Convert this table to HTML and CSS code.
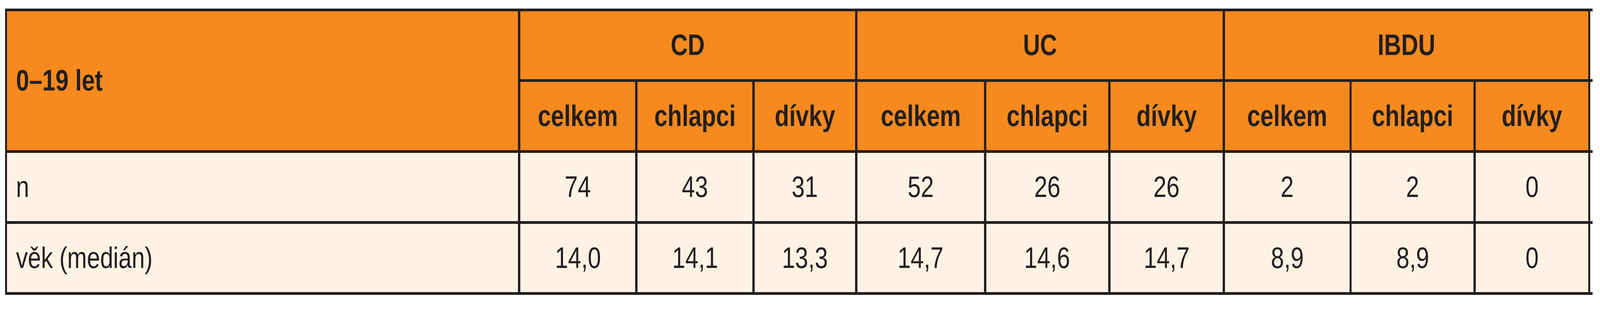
FILE: index.html
```html
<!DOCTYPE html>
<html lang="cs">
<head>
<meta charset="utf-8">
<title>0–19 let</title>
<link rel="stylesheet" href="styles.css">
</head>
<body>
<div class="table">
  <div class="cell head corner"><span class="t">0–19 let</span></div>
  <div class="cell head group"><span class="t">CD</span></div>
  <div class="cell head group"><span class="t">UC</span></div>
  <div class="cell head group"><span class="t">IBDU</span></div>
  <div class="edge" aria-hidden="true"></div>

  <div class="cell head"><span class="t">celkem</span></div>
  <div class="cell head"><span class="t">chlapci</span></div>
  <div class="cell head"><span class="t">dívky</span></div>
  <div class="cell head"><span class="t">celkem</span></div>
  <div class="cell head"><span class="t">chlapci</span></div>
  <div class="cell head"><span class="t">dívky</span></div>
  <div class="cell head"><span class="t">celkem</span></div>
  <div class="cell head"><span class="t">chlapci</span></div>
  <div class="cell head"><span class="t">dívky</span></div>
  <div class="edge" aria-hidden="true"></div>

  <div class="cell label"><span class="t">n</span></div>
  <div class="cell"><span class="t">74</span></div>
  <div class="cell"><span class="t">43</span></div>
  <div class="cell"><span class="t">31</span></div>
  <div class="cell"><span class="t">52</span></div>
  <div class="cell"><span class="t">26</span></div>
  <div class="cell"><span class="t">26</span></div>
  <div class="cell"><span class="t">2</span></div>
  <div class="cell"><span class="t">2</span></div>
  <div class="cell"><span class="t">0</span></div>
  <div class="edge" aria-hidden="true"></div>

  <div class="cell label"><span class="t">věk (medián)</span></div>
  <div class="cell"><span class="t">14,0</span></div>
  <div class="cell"><span class="t">14,1</span></div>
  <div class="cell"><span class="t">13,3</span></div>
  <div class="cell"><span class="t">14,7</span></div>
  <div class="cell"><span class="t">14,6</span></div>
  <div class="cell"><span class="t">14,7</span></div>
  <div class="cell"><span class="t">8,9</span></div>
  <div class="cell"><span class="t">8,9</span></div>
  <div class="cell"><span class="t">0</span></div>
  <div class="edge" aria-hidden="true"></div>
</div>
</body>
</html>
```

FILE: styles.css
```css
:root {
  /* one reference pixel, horizontally and vertically */
  --u: calc(100vw / 4873);
  --v: calc(100vh / 800);
  --line: #231f20;
  --orange: #f68a1f;
  --cream: #fef2e5;
}

html, body {
  margin: 0;
  padding: 0;
  background: #ffffff;
  overflow: hidden;
}

body {
  padding: calc(22 * var(--v)) 0 0 calc(15 * var(--u));
  font-family: "Liberation Sans", Arial, sans-serif;
  font-size: calc(90 * var(--u));
  line-height: 1;
  color: var(--line);
}

.table {
  display: inline-grid;
  grid-template-columns:
    calc(1556 * var(--u)) calc(350 * var(--u)) calc(350 * var(--u))
    calc(305 * var(--u)) calc(386 * var(--u)) calc(371 * var(--u))
    calc(342 * var(--u)) calc(379 * var(--u)) calc(371 * var(--u))
    calc(342 * var(--u)) calc(7 * var(--u));
  grid-template-rows:
    calc(174 * var(--v)) calc(175 * var(--v))
    calc(175 * var(--v)) calc(175 * var(--v));
  gap: calc(7 * var(--v)) calc(7 * var(--u));
  padding: calc(7 * var(--v)) 0 calc(7 * var(--v)) calc(7 * var(--u));
  background: var(--line);
}

.cell {
  display: flex;
  align-items: center;
  justify-content: center;
  background-color: var(--cream);
  white-space: nowrap;
  overflow: hidden;
}

/* the printed face is a narrow grotesque */
.t {
  display: inline-block;
  transform: scaleX(0.8);
  transform-origin: center;
}

.head {
  background-color: var(--orange);
  font-weight: bold;
}

.corner {
  grid-row: span 2;
}

.group {
  grid-column: span 3;
}

.corner,
.label {
  justify-content: flex-start;
  padding-left: calc(27 * var(--u));
}

.corner .t,
.label .t {
  transform-origin: left center;
}

/* rules run a little past the right frame line */
.edge {
  grid-column: 11;
  background: #ffffff;
}

.edge:nth-child(5) {
  grid-row: 1;
}
```
